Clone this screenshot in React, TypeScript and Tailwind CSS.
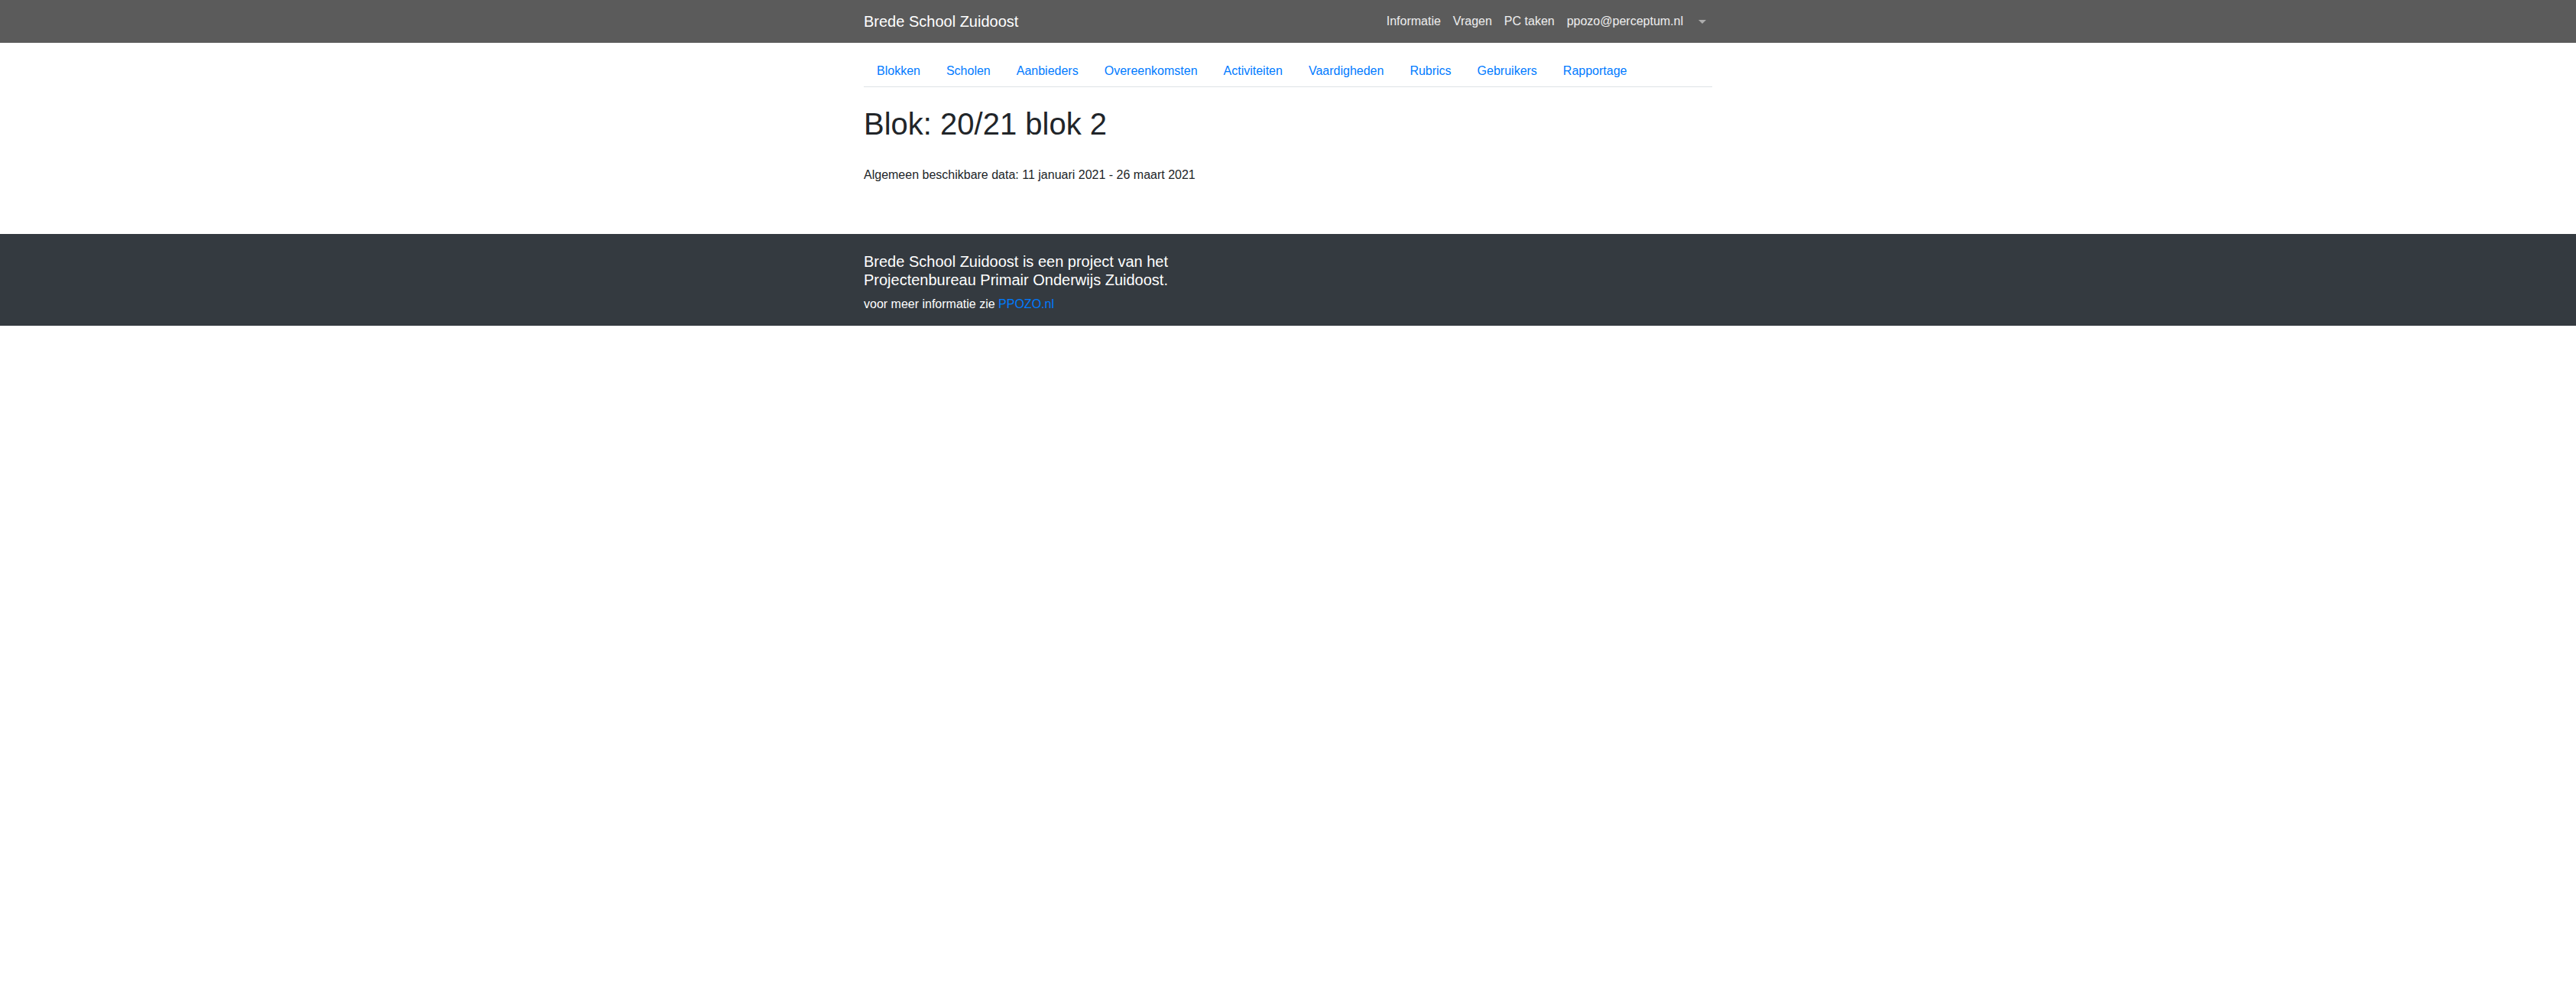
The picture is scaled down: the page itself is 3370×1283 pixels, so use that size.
const tabs = ['Blokken', 'Scholen', 'Aanbieders', 'Overeenkomsten', 'Activiteiten', 'Vaardigheden', 'Rubrics', 'Gebruikers', 'Rapportage']

const rightLinks = ['Informatie', 'Vragen', 'PC taken', 'ppozo@perceptum.nl']

export default function App() {
  return (
    <div className="min-h-screen bg-white text-[#212529] text-base leading-6 font-['Liberation_Sans',Arial,sans-serif]">
      {/* navbar */}
      <nav className="bg-[#5b5b5b] h-14">
        <div className="w-[1110px] mx-auto h-full flex items-center justify-between">
          <a href="#" className="text-white text-xl leading-[30px]">Brede School Zuidoost</a>
          <ul className="flex items-center">
            {rightLinks.map((l) => (
              <li key={l}>
                <a href="#" className="block px-2 py-2 text-white/90">{l}</a>
              </li>
            ))}
            <li>
              <a href="#" className="flex items-center pl-2 pr-2 py-2 h-10">
                <span className="ml-1 w-0 h-0 border-t-[5px] border-t-white/50 border-x-[5px] border-x-transparent" />
              </a>
            </li>
          </ul>
        </div>
      </nav>

      <main className="w-[1110px] mx-auto pb-[65px]">
        <ul className="mt-4 flex border-b border-[#dee2e6]">
          {tabs.map((t) => (
            <li key={t} className="-mb-px">
              <a href="#" className="block border border-transparent px-4 py-2 text-[#007bff]">{t}</a>
            </li>
          ))}
        </ul>

        <h1 className="mt-6 mb-[31px] text-[40px] leading-[48px] font-medium">Blok: 20/21 blok 2</h1>
        <p>Algemeen beschikbare data: 11 januari 2021 - 26 maart 2021</p>
      </main>

      <footer className="bg-[#343a40] text-white pt-6 pb-4">
        <div className="w-[1110px] mx-auto">
          <h5 className="text-xl leading-6 mb-2">
            Brede School Zuidoost is een project van het
            <br />
            Projectenbureau Primair Onderwijs Zuidoost.
          </h5>
          <p>
            voor meer informatie zie <a href="#" className="text-[#007bff]">PPOZO.nl</a>
          </p>
        </div>
      </footer>
    </div>
  )
}
